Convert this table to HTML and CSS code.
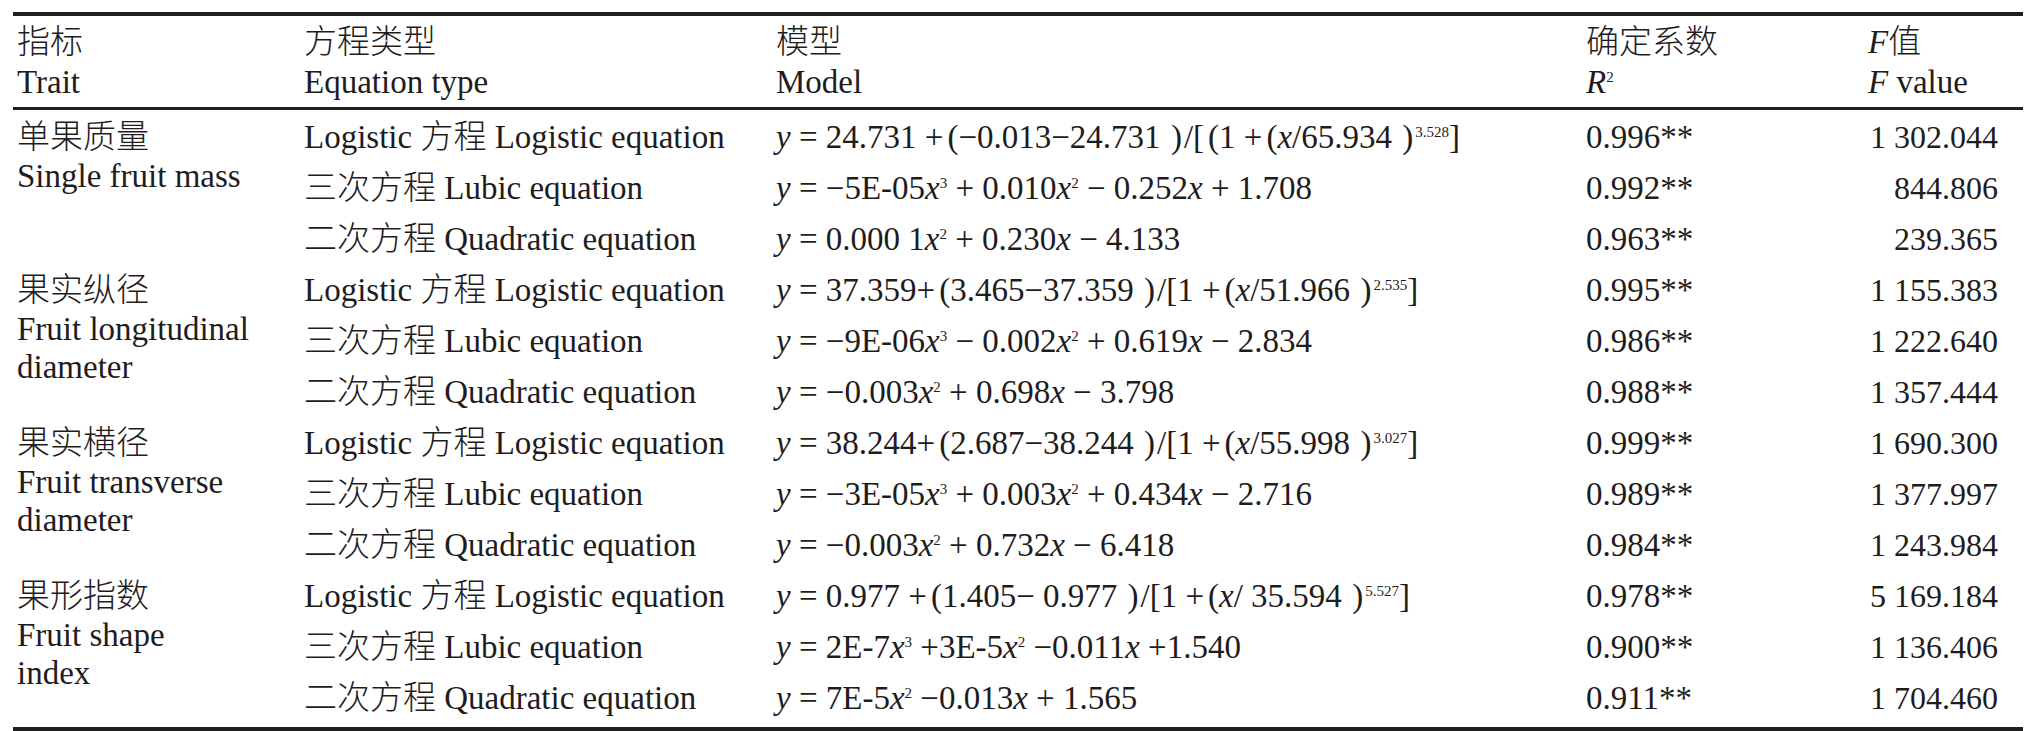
FILE: index.html
```html
<!DOCTYPE html>
<html lang="zh">
<head>
<meta charset="utf-8">
<title>Table</title>
<link rel="stylesheet" href="styles.css">
</head>
<body>
<div class="table">
  <div class="head">
    <div class="c1">指标<br>Trait</div>
    <div>方程类型<br>Equation type</div>
    <div>模型<br>Model</div>
    <div>确定系数<br><i>R</i><sup>2</sup></div>
    <div><i>F</i>值<br><i>F</i> value</div>
  </div>
  <div class="body">
    <div class="trait">单果质量<br>Single fruit mass</div>
    <div>Logistic 方程 Logistic equation</div>
    <div><i>y</i> = 24.731 +<span class="po">(</span>−0.013−24.731 <span class="pc">)</span>/[<span class="po">(</span>1 +<span class="po">(</span><i>x</i>/65.934 <span class="pc">)</span><sup>3.528</sup>]</div>
    <div>0.996**</div>
    <div class="num">1 302.044</div>

    <div>三次方程 Lubic equation</div>
    <div><i>y</i> = −5E-05<i>x</i><sup>3</sup> + 0.010<i>x</i><sup>2</sup> − 0.252<i>x</i> + 1.708</div>
    <div>0.992**</div>
    <div class="num">844.806</div>

    <div>二次方程 Quadratic equation</div>
    <div><i>y</i> = 0.000 1<i>x</i><sup>2</sup> + 0.230<i>x</i> − 4.133</div>
    <div>0.963**</div>
    <div class="num">239.365</div>

    <div class="trait">果实纵径<br>Fruit longitudinal<br>diameter</div>
    <div>Logistic 方程 Logistic equation</div>
    <div><i>y</i> = 37.359+<span class="po">(</span>3.465−37.359 <span class="pc">)</span>/[1 +<span class="po">(</span><i>x</i>/51.966 <span class="pc">)</span><sup>2.535</sup>]</div>
    <div>0.995**</div>
    <div class="num">1 155.383</div>

    <div>三次方程 Lubic equation</div>
    <div><i>y</i> = −9E-06<i>x</i><sup>3</sup> − 0.002<i>x</i><sup>2</sup> + 0.619<i>x</i> − 2.834</div>
    <div>0.986**</div>
    <div class="num">1 222.640</div>

    <div>二次方程 Quadratic equation</div>
    <div><i>y</i> = −0.003<i>x</i><sup>2</sup> + 0.698<i>x</i> − 3.798</div>
    <div>0.988**</div>
    <div class="num">1 357.444</div>

    <div class="trait">果实横径<br>Fruit transverse<br>diameter</div>
    <div>Logistic 方程 Logistic equation</div>
    <div><i>y</i> = 38.244+<span class="po">(</span>2.687−38.244 <span class="pc">)</span>/[1 +<span class="po">(</span><i>x</i>/55.998 <span class="pc">)</span><sup>3.027</sup>]</div>
    <div>0.999**</div>
    <div class="num">1 690.300</div>

    <div>三次方程 Lubic equation</div>
    <div><i>y</i> = −3E-05<i>x</i><sup>3</sup> + 0.003<i>x</i><sup>2</sup> + 0.434<i>x</i> − 2.716</div>
    <div>0.989**</div>
    <div class="num">1 377.997</div>

    <div>二次方程 Quadratic equation</div>
    <div><i>y</i> = −0.003<i>x</i><sup>2</sup> + 0.732<i>x</i> − 6.418</div>
    <div>0.984**</div>
    <div class="num">1 243.984</div>

    <div class="trait">果形指数<br>Fruit shape<br>index</div>
    <div>Logistic 方程 Logistic equation</div>
    <div><i>y</i> = 0.977 +<span class="po">(</span>1.405− 0.977 <span class="pc">)</span>/[1 +<span class="po">(</span><i>x</i>/ 35.594 <span class="pc">)</span><sup>5.527</sup>]</div>
    <div>0.978**</div>
    <div class="num">5 169.184</div>

    <div>三次方程 Lubic equation</div>
    <div><i>y</i> = 2E-7<i>x</i><sup>3</sup> +3E-5<i>x</i><sup>2</sup> −0.011<i>x</i> +1.540</div>
    <div>0.900**</div>
    <div class="num">1 136.406</div>

    <div>二次方程 Quadratic equation</div>
    <div><i>y</i> = 7E-5<i>x</i><sup>2</sup> −0.013<i>x</i> + 1.565</div>
    <div>0.911**</div>
    <div class="num">1 704.460</div>
  </div>
</div>
</body>
</html>
```

FILE: styles.css
```css
html, body {
  margin: 0;
  padding: 0;
  background: #ffffff;
}

body {
  font-family: "Liberation Serif", "Noto Sans CJK SC", serif;
  font-size: 33px;
  font-weight: 300;
  color: #1f1c1d;
}

.table {
  margin: 12px 0 0 13px;
  width: 2010px;
  border-top: 4px solid #231f20;
  border-bottom: 4px solid #231f20;
}

.head,
.body {
  display: grid;
  grid-template-columns: 291px 472px 810px 282px 155px;
}

.head {
  padding: 7px 0 5px;
  line-height: 39.5px;
  border-bottom: 3px solid #231f20;
}

.head > div {
  white-space: nowrap;
}

.c1,
.trait {
  padding-left: 4px;
}

.body {
  padding: 2px 0 3px;
  grid-auto-rows: 51px;
  line-height: 51px;
}

.body > div {
  white-space: nowrap;
}

.body > .trait {
  grid-row: span 3;
  line-height: 38.5px;
  padding-top: 6px;
  white-space: normal;
}

.body > .num {
  text-align: right;
  padding-right: 25px;
  font-size: 32px;
}

.po {
  margin-left: 4px;
}

.pc {
  margin: 0 2px;
}

i {
  font-style: italic;
}

sup {
  font-size: 15px;
  line-height: 0;
  vertical-align: 11px;
}
```
